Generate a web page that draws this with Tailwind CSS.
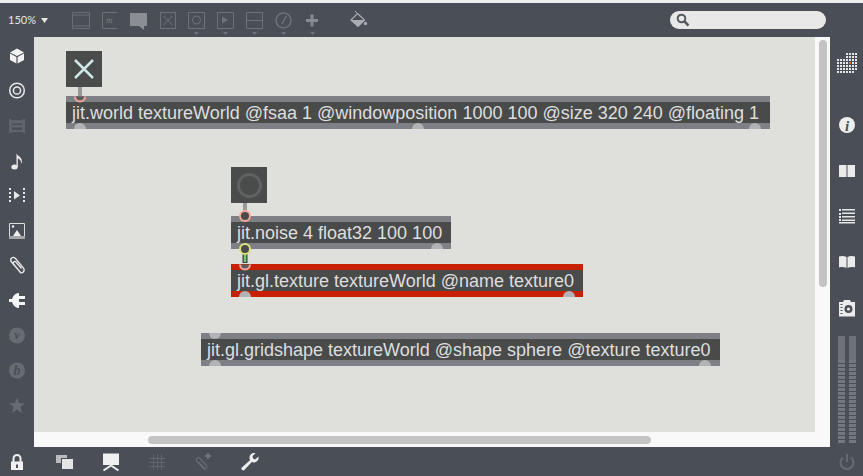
<!DOCTYPE html>
<html lang="en">
<head>
<meta charset="UTF-8">
<title>Patcher</title>
<script src="https://cdn.jsdelivr.net/npm/@tailwindcss/browser@4"></script>
</head>
<body class="w-[863px] h-[476px] overflow-hidden flex flex-col bg-[#4a4e56] font-['Liberation_Sans',sans-serif]">

<!-- title strip -->
<div class="h-[3px] bg-[#efefef] shrink-0"></div>

<!-- top toolbar -->
<div class="h-[34px] shrink-0 flex items-center">
  <div class="w-[66px] pl-[8px] flex items-center gap-[5px] font-['Lato',sans-serif] text-[11px] text-[#e6e6e6]">
    <span>150%</span>
    <svg width="7" height="5" viewBox="0 0 7 5"><path d="M0 0H7L3.5 5Z" fill="#e6e6e6"/></svg>
  </div>
  <svg width="29" height="34" viewBox="0 0 29 34" fill="none" stroke="#6a6e75"><path d="M6.5 9.500H23.500V25.500H6.500ZM6.500 23H23.500M6.500 12H23.500"/></svg>
  <svg width="29" height="34" viewBox="0 0 29 34" fill="none" stroke="#6f7379"><path d="M22 9.500H7.500V25.500H22"/><text x="11" y="20" font-size="9" font-style="italic" font-family="Liberation Serif" fill="#7a7e84" stroke="none">m</text></svg>
  <svg width="29" height="34" viewBox="0 0 29 34"><path d="M6 10H23V23H20V27L15 23H6Z" fill="#8b8e93"/></svg>
  <svg width="29" height="34" viewBox="0 0 29 34" fill="none" stroke="#6f7379"><path d="M7.500 9.500H22.500V25.500H7.500ZM10.500 13L19.500 22M19.500 13L10.500 22"/></svg>
  <svg width="29" height="34" viewBox="0 0 29 34" fill="none" stroke="#6f7379"><path d="M6.500 9.500H22.500V25.500H6.500Z"/><circle cx="14.500" cy="17" r="4"/><path d="M12 29H17L14.500 32Z" fill="#6f7379" stroke="none"/></svg>
  <svg width="29" height="34" viewBox="0 0 29 34" fill="none" stroke="#6f7379"><path d="M6.500 9.500H22.500V25.500H6.500Z"/><path d="M11 13.500L17 17L11 20.500Z" fill="#6f7379" stroke="none"/><path d="M12 29H17L14.500 32Z" fill="#6f7379" stroke="none"/></svg>
  <svg width="29" height="34" viewBox="0 0 29 34" fill="none" stroke="#6f7379"><path d="M6.500 9.500H22.500V25.500H6.500ZM6.500 17.500H22.500"/><path d="M12 29H17L14.500 32Z" fill="#6f7379" stroke="none"/></svg>
  <svg width="29" height="34" viewBox="0 0 29 34" fill="none" stroke="#6f7379"><circle cx="14.500" cy="17.500" r="7.500" stroke-width="1.500"/><path d="M13 21L17.500 13" stroke-width="1.500"/><path d="M12 29H17L14.500 32Z" fill="#6f7379" stroke="none"/></svg>
  <svg width="29" height="34" viewBox="0 0 29 34"><path d="M12.500 11.500H15.500V16H20V19H15.500V23.500H12.500V19H8V16H12.500Z" fill="#858990"/><path d="M12 29H17L14.500 32Z" fill="#6f7379"/></svg>
  <!-- paint bucket -->
  <svg class="ml-[17px]" width="29" height="34" viewBox="0 0 29 34"><path d="M13.500 10.500L20.500 17L14 23.500L7 17Z" fill="none" stroke="#a9acb0" stroke-width="1.200"/><path d="M7 17H20.500L14 23.500Z" fill="#a9acb0"/><path d="M13.500 10.500L11 8" stroke="#a9acb0"/><circle cx="21.500" cy="20.500" r="1.700" fill="#a9acb0"/></svg>
  <div class="ml-auto mr-[37px] w-[156px] h-[18px] rounded-full bg-[#e8e8e8] flex items-center pl-[5px]">
    <svg width="16" height="16" viewBox="0 0 16 16" fill="none" stroke="#55595f"><circle cx="6.500" cy="6.500" r="3.800" stroke-width="2"/><path d="M9.500 9.500L13.500 13.500" stroke-width="2.500"/></svg>
  </div>
</div>

<div class="flex flex-1 min-h-0">
  <!-- left sidebar -->
  <div class="w-[34px] shrink-0 pt-[1px] flex flex-col items-center">
    <svg width="20" height="35" viewBox="0 0 20 35"><path d="M10 10.500L17 14.500L10 18L3 14.500Z" fill="#f2f2f2"/><path d="M3 15.500L9.400 19V25.500L3 22Z M17 15.500L10.600 19V25.500L17 22Z" fill="#f2f2f2"/></svg>
    <svg width="20" height="35" viewBox="0 0 20 35" fill="none" stroke="#eaeaea"><circle cx="10" cy="17.500" r="7.300" stroke-width="1.500"/><circle cx="10" cy="17.500" r="3.600" stroke-width="1.500"/></svg>
    <svg width="20" height="35" viewBox="0 0 20 35" fill="#60646b"><path d="M3 12H17V24H3Z"/><path d="M5 15.500H15V17H5ZM5 19.500H15V22H5Z" fill="#4a4e56"/><path d="M2 11H4V25H2ZM16 11H18V25H16Z"/></svg>
    <svg width="20" height="35" viewBox="0 0 20 35"><ellipse cx="7.500" cy="24" rx="3.200" ry="2.500" fill="#eaeaea"/><path d="M9.500 24V10.500C10.500 13 15 14 15 18.500C15 19.500 14.800 20 14.500 21C14.500 17.500 12.500 16 10.800 15.500V24Z" fill="#eaeaea"/></svg>
    <svg width="20" height="35" viewBox="0 0 20 35" fill="#e8e8e8"><path d="M2 10H4V12H2ZM2 14H4V16H2ZM2 18H4V20H2ZM2 22H4V24H2ZM16 10H18V12H16ZM16 14H18V16H16ZM16 18H18V20H16ZM16 22H18V24H16ZM7 13L13 17.500L7 21.500Z"/></svg>
    <svg width="20" height="35" viewBox="0 0 20 35"><path d="M2.500 10.500H17.500V25.500H2.500Z" fill="none" stroke="#dcdcdc"/><path d="M2 23H18V26H2Z" fill="#a4a6aa"/><path d="M10 17L14 23H6Z" fill="#f0f0f0"/><circle cx="6" cy="13.500" r="1.200" fill="#f0f0f0"/></svg>
    <svg width="20" height="35" viewBox="0 0 20 35" fill="none" stroke="#eaeaea" stroke-width="1.300"><path d="M14 25L4.500 14C2 10.500 6 8 8.500 10.500L16.500 20C18.500 23.500 15 26 13 24L6.500 16C5.500 14 7.500 12.800 9 14L14.500 20.500"/></svg>
    <svg width="20" height="35" viewBox="0 0 20 35" fill="#f5f5f5"><path d="M2 16H5C6 13 8 10.500 11 10H12V25H11C8 24.500 6 22 5 19H2ZM12 13H18V16H12ZM12 19H18V22H12Z"/></svg>
    <svg width="20" height="35" viewBox="0 0 20 35"><circle cx="10" cy="17.500" r="8" fill="#676b72"/><text x="10" y="21" text-anchor="middle" font-size="12" font-weight="700" font-style="italic" font-family="Liberation Serif" fill="#4a4e56">v</text></svg>
    <svg width="20" height="35" viewBox="0 0 20 35"><circle cx="10" cy="17.500" r="8" fill="#676b72"/><text x="10" y="22" text-anchor="middle" font-size="14" font-weight="700" font-style="italic" font-family="Liberation Serif" fill="#4a4e56">b</text></svg>
    <svg width="20" height="35" viewBox="0 0 20 35"><path d="M10 9.500L12.200 15.300H18L13.300 19L15 25L10 21.500L5 25L6.700 19L2 15.300H7.800Z" fill="#676b72"/></svg>
  </div>

  <!-- patcher canvas -->
  <div class="relative w-[796px] bg-[#f9f9f9] shrink-0">
    <div class="absolute left-0 top-0 w-[781px] h-[395px] bg-[#dfe0db]"></div>

    <!-- toggle -->
    <div class="absolute left-[32px] top-[14px] w-[36px] h-[36px] bg-[#494c4b] flex items-center justify-center">
      <svg width="22" height="22" viewBox="0 0 22 22" stroke="#cde6e6" stroke-width="2.500"><path d="M2 2L20 20M20 2L2 20"/></svg>
    </div>
    <!-- button -->
    <div class="absolute left-[197px] top-[130px] w-[36px] h-[36px] bg-[#494c4b] flex items-center justify-center">
      <div class="w-[25px] h-[25px] rounded-full border-[3px] border-[#5f6162]"></div>
    </div>

    <!-- objects -->
    <div class="absolute left-[32px] top-[59px] w-[704px] h-[33px] bg-[#7f8085] overflow-hidden">
      <div class="mt-[6px] h-[21px] bg-[#494b4b] pl-[6px] pt-[1px] text-[18px] leading-[21px] text-[#dedede] whitespace-nowrap">jit.world textureWorld @fsaa 1 @windowposition 1000 100 @size 320 240 @floating 1</div>
      <div class="absolute left-[8px] top-[27px] w-[12px] h-[12px] rounded-full bg-[#b2b3b6]"></div>
      <div class="absolute left-[346px] top-[27px] w-[12px] h-[12px] rounded-full bg-[#b2b3b6]"></div>
      <div class="absolute left-[683px] top-[27px] w-[12px] h-[12px] rounded-full bg-[#b2b3b6]"></div>
    </div>
    <div class="absolute left-[197px] top-[179px] w-[220px] h-[33px] bg-[#7f8085] overflow-hidden">
      <div class="mt-[6px] h-[21px] bg-[#494b4b] pl-[6px] pt-[1px] text-[18px] leading-[21px] text-[#dedede] whitespace-nowrap">jit.noise 4 float32 100 100</div>
      <div class="absolute left-[200px] top-[27px] w-[12px] h-[12px] rounded-full bg-[#b2b3b6]"></div>
    </div>
    <div class="absolute left-[197px] top-[227px] w-[352px] h-[33px] bg-[#c92000] overflow-hidden">
      <div class="mt-[6px] h-[21px] bg-[#494b4b] pl-[6px] pt-[1px] text-[18px] leading-[21px] text-[#dedede] whitespace-nowrap">jit.gl.texture textureWorld @name texture0</div>
      <div class="absolute left-[8px] top-[27px] w-[12px] h-[12px] rounded-full bg-[#b2b3b6]"></div>
      <div class="absolute left-[332px] top-[27px] w-[12px] h-[12px] rounded-full bg-[#b2b3b6]"></div>
    </div>
    <div class="absolute left-[167px] top-[296px] w-[519px] h-[33px] bg-[#7f8085] overflow-hidden">
      <div class="mt-[6px] h-[21px] bg-[#494b4b] pl-[6px] pt-[1px] text-[18px] leading-[21px] text-[#dedede] whitespace-nowrap">jit.gl.gridshape textureWorld @shape sphere @texture texture0</div>
      <div class="absolute left-[8px] top-[-6px] w-[12px] h-[12px] rounded-full bg-[#b2b3b6]"></div>
      <div class="absolute left-[8px] top-[27px] w-[12px] h-[12px] rounded-full bg-[#b2b3b6]"></div>
      <div class="absolute left-[498px] top-[27px] w-[12px] h-[12px] rounded-full bg-[#b2b3b6]"></div>
    </div>

    <!-- patch cords and highlighted ports -->
    <svg class="absolute left-0 top-0" width="781" height="395" viewBox="0 0 781 395" fill="none">
      <path d="M46 50V59" stroke="#979899" stroke-width="4"/>
      <path d="M41 59.500A5 5 0 0 0 51 59.500" fill="#5b5d5f" stroke="#f4a999" stroke-width="2"/>
      <path d="M211 166V175" stroke="#979899" stroke-width="4"/>
      <circle cx="211" cy="179" r="5" fill="#494b4b" stroke="#f4a999" stroke-width="2"/>
      <path d="M206 227.500A5 5 0 0 0 216 227.500" fill="#5b5d5f" stroke="#f4a999" stroke-width="2"/>
      <path d="M211 217V226" stroke="#3c3f3f" stroke-width="5"/>
      <path d="M211 218V225" stroke="#6cd070" stroke-width="2.500"/>
      <circle cx="211" cy="212" r="5" fill="#494b4b" stroke="#dde27a" stroke-width="2"/>
    </svg>

    <!-- scrollbars -->
    <div class="absolute left-[785px] top-[3px] w-[8px] h-[247px] rounded-full bg-[#c4c4c4]"></div>
    <div class="absolute left-[114px] top-[399px] w-[503px] h-[8px] rounded-full bg-[#c4c4c4]"></div>
  </div>

  <!-- right sidebar -->
  <div class="flex-1 flex flex-col items-start pl-[8px]">
    <svg class="mt-[16px] ml-[-1px]" width="20" height="20" viewBox="0 0 20 20">
      <defs><pattern id="dots" width="3" height="3" patternUnits="userSpaceOnUse"><rect width="2" height="2" fill="#e6e6e6"/></pattern></defs>
      <rect x="9" y="0" width="12" height="6" fill="url(#dots)"/>
      <rect x="0" y="6" width="21" height="12" fill="url(#dots)"/>
      <rect x="0" y="18" width="18" height="2" fill="url(#dots)"/>
      <rect x="12" y="9" width="2" height="2" fill="#d86a1a"/>
    </svg>
    <svg class="mt-[43px]" width="18" height="18" viewBox="0 0 18 18"><circle cx="9" cy="9" r="8" fill="#eeeeee"/><text x="9" y="15" text-anchor="middle" font-size="15" font-weight="700" font-style="italic" font-family="Liberation Serif" fill="#4a4e56">i</text></svg>
    <svg class="mt-[30px]" width="18" height="14" viewBox="0 0 18 14" fill="#ebebeb"><path d="M1 1H8.500V13H1ZM9.500 1H17V13H9.500Z"/></svg>
    <svg class="mt-[30px]" width="18" height="16" viewBox="0 0 18 16" fill="#e6e6e6"><path d="M1 1h2v2H1zM4 1h13v1.500H4zM1 5h2v2H1zM4 4.500h13V6H4zM1 8h2v2H1zM4 8h13v1.500H4zM1 11h2v2H1zM4 11.500h13V13H4zM1 14h16v1.500H1z"/></svg>
    <svg class="mt-[31px]" width="18" height="14" viewBox="0 0 18 14" fill="#ebebeb"><path d="M1 1.500C3.500 0.500 6.500 0.800 8.500 2V13C6.500 11.800 3.500 11.800 1 12.500ZM17 1.500C14.500 0.500 11.500 0.800 9.500 2V13C11.500 11.800 14.500 11.800 17 12.500Z"/></svg>
    <svg class="mt-[30px]" width="18" height="18" viewBox="0 0 18 18"><path d="M1 3H5L6 1H12L13 3H17V17.500H1Z" fill="#ebebeb"/><circle cx="10.500" cy="10" r="4" fill="#4a4e56"/><circle cx="10.500" cy="10" r="1.600" fill="#ebebeb"/><path d="M2.500 5h2v1h-2zM2.500 8h2v1h-2zM2.500 11h2v1h-2zM2.500 14h2v1h-2z" fill="#4a4e56"/></svg>
    <div class="mt-[19px] flex gap-[4px]">
      <div class="w-[7px] flex flex-col">
        <div class="h-[24px] bg-[#6f7278]"></div>
        <div class="h-[84px] bg-[repeating-linear-gradient(#74777d_0,#74777d_3px,#4a4e56_3px,#4a4e56_4px)]"></div>
      </div>
      <div class="w-[7px] flex flex-col">
        <div class="h-[24px] bg-[#6f7278]"></div>
        <div class="h-[84px] bg-[repeating-linear-gradient(#74777d_0,#74777d_3px,#4a4e56_3px,#4a4e56_4px)]"></div>
      </div>
    </div>
  </div>
</div>

<!-- bottom toolbar -->
<div class="h-[29px] shrink-0 flex items-center">
  <svg class="ml-[7px]" width="20" height="20" viewBox="0 0 20 20"><path d="M6.500 10V6.500A3.500 3.500 0 0 1 13.500 6.500V10" fill="none" stroke="#f0f0f0" stroke-width="2"/><path d="M4 9.500H16V18H4Z" fill="#f0f0f0"/><rect x="9" y="12.500" width="2" height="3.500" fill="#4a4e56"/></svg>
  <svg class="ml-[28px]" width="20" height="20" viewBox="0 0 20 20"><path d="M1 3H12V6H6V11H1Z" fill="#b9bbbe"/><path d="M7 7H18V17H7Z" fill="#e4e4e4"/></svg>
  <svg class="ml-[26px]" width="20" height="20" viewBox="0 0 20 20" fill="#f0f0f0"><path d="M2 1.500H18V13H2Z"/><path d="M10 13.500L2.500 18.500M10 13.500L17.500 18.500" stroke="#f0f0f0" stroke-width="2"/></svg>
  <svg class="ml-[26px]" width="20" height="20" viewBox="0 0 20 20" stroke="#62666c" fill="none"><path d="M2 6.500H18M2 10.500H18M2 14.500H18M6.500 2V18M10.500 2V18M14.500 2V18"/></svg>
  <svg class="ml-[27px]" width="20" height="20" viewBox="0 0 20 20" fill="none" stroke="#686c72" stroke-width="1.200"><path d="M11 18L3 9.500C1 7 4 4.500 6 6.500L12.500 13.500C14 15.500 11.500 17.500 10 16L5 10.500"/><path d="M14 1V7M11 4H17" stroke-width="1.500" stroke="#7a7e84"/></svg>
  <svg class="ml-[26px]" width="20" height="20" viewBox="0 0 20 20" fill="#eeeeee"><path d="M18.500 4.500L15 7.500L13 6.500L12.500 4L15.500 1.300C12.500 0.500 9.500 2.500 9.500 6C9.500 7 9.700 7.500 10 8.200L1.800 15.500C0.500 17 2.800 19.500 4.300 18L11.800 10C15.500 11.500 19.500 8.500 18.500 4.500Z"/></svg>
  <svg class="ml-auto mr-[6px]" width="20" height="20" viewBox="0 0 20 20" fill="none" stroke="#686c72" stroke-width="2"><path d="M6 5.500A6.500 6.500 0 1 0 14 5.500M10 2V10"/></svg>
</div>
</body>
</html>
